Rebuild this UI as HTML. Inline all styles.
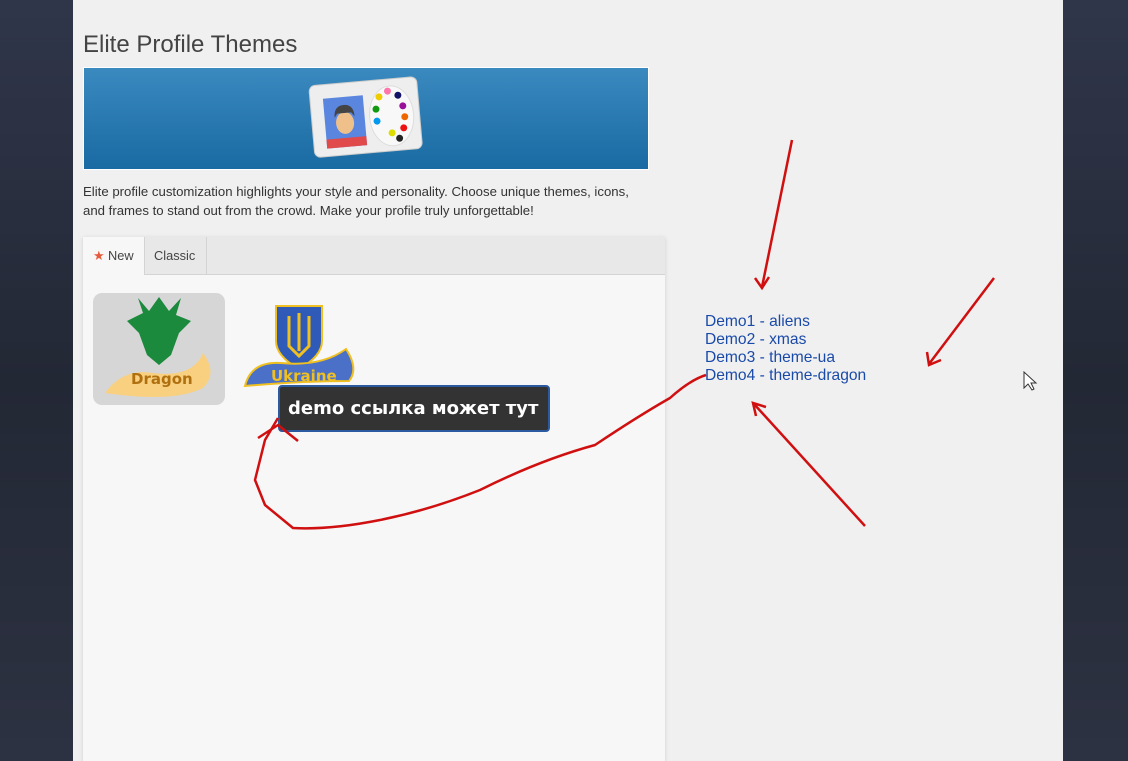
<!DOCTYPE html>
<html><head><meta charset="utf-8"><style>
html,body{margin:0;width:1128px;height:761px;overflow:hidden}
body{background:#2a303e;font-family:"Liberation Sans",sans-serif;position:relative}
.side{position:absolute;top:0;height:761px;background:linear-gradient(180deg,#30364a,#232835 50%,#2d3242)}
.main{position:absolute;left:73px;top:0;width:990px;height:761px;background:#f0f0f0}
h1{position:absolute;left:83px;top:31px;margin:0;font-weight:normal;font-size:24px;color:#444}
.banner{position:absolute;left:83px;top:67px;width:566px;height:103px;box-sizing:border-box;border:1px solid #fff;background:linear-gradient(180deg,#3a8ac0,#1a6aa3)}
.desc{position:absolute;left:83px;top:182px;width:562px;font-size:13.2px;line-height:19px;color:#333}
.panel{position:absolute;left:83px;top:237px;width:582px;height:524px;background:#f7f7f7;box-shadow:0 1px 4px rgba(0,0,0,.15)}
.tabs{height:37px;background:#e8e8e8;border-bottom:1px solid #d4d4d4;position:relative}
.tab{position:absolute;top:0;height:37px;line-height:38px;font-size:12.8px;color:#444;box-sizing:border-box}
.links{position:absolute;left:705px;top:313px;font-size:15.6px;line-height:18px;color:#1a4aa8}
.tip{position:absolute;left:278px;top:385px;width:272px;height:47px;box-sizing:border-box;background:#333;border:2px solid #2c5aa0;border-radius:4px;color:#fff;font-family:"DejaVu Sans",sans-serif;font-weight:bold;font-size:18px;line-height:43px;padding-left:8px}
</style></head><body>
<div class="side" style="left:0;width:73px"></div>
<div class="side" style="left:1063px;width:65px"></div>
<div class="main"></div>
<h1>Elite Profile Themes</h1>
<div class="banner">
<svg width="566" height="103" style="position:absolute;left:0;top:0">
<g transform="translate(228,13) rotate(-5 55 40)">
<rect x="0" y="0" width="108" height="72" rx="6" fill="#eee" stroke="#ccc"/>
<rect x="13" y="14" width="40" height="50" fill="#5a86e0"/>
<rect x="13" y="55" width="40" height="9" fill="#e04a4a"/>
<ellipse cx="33" cy="40" rx="9" ry="11" fill="#f0c08a"/>
<path d="M23 34 Q23 22 33 22 Q43 22 43 34 L40 30 L26 30Z" fill="#444"/>
<ellipse cx="80" cy="37" rx="22" ry="30" fill="#f8f8f8" stroke="#ddd"/>
<circle cx="78" cy="12" r="3.5" fill="#f7a"/><circle cx="88" cy="17" r="3.5" fill="#116"/><circle cx="69" cy="17" r="3.5" fill="#ec0"/>
<circle cx="92" cy="28" r="3.5" fill="#919"/><circle cx="65" cy="29" r="3.5" fill="#191"/><circle cx="93" cy="39" r="3.5" fill="#e60"/>
<circle cx="65" cy="41" r="3.5" fill="#09e"/><circle cx="91" cy="50" r="3.5" fill="#e11"/><circle cx="79" cy="54" r="3.5" fill="#dd0"/><circle cx="86" cy="60" r="3.5" fill="#222"/>
</g></svg></div>
<div class="desc">Elite profile customization highlights your style and personality. Choose unique themes, icons, and frames to stand out from the crowd. Make your profile truly unforgettable!</div>
<div class="panel">
<div class="tabs">
<div class="tab" style="left:0;width:62px;background:#f7f7f7;border-right:1px solid #d4d4d4;padding-left:10px;height:38px"><span style="color:#e55a3a">★</span> New</div>
<div class="tab" style="left:62px;width:62px;border-right:1px solid #d4d4d4;padding-left:9px">Classic</div>
</div>
<div style="position:absolute;left:10px;top:56px;width:132px;height:112px;background:#d6d6d6;border-radius:9px">
<svg width="132" height="112"><path d="M50 20 L45 5 L56 18 L66 4 L76 18 L88 5 L83 22 L98 28 L86 40 L78 62 L66 72 L54 62 L46 40 L34 28Z" fill="#1c8a3c"/>
<path d="M12 100 Q30 75 60 80 Q100 85 110 60 Q125 80 110 95 Q80 110 12 100Z" fill="#f8d080"/>
<text x="38" y="91" font-family="DejaVu Sans" font-size="15" font-weight="bold" fill="#b07010">Dragon</text></svg></div>
<div style="position:absolute;left:158px;top:64px">
<svg width="116" height="90"><path d="M35 5 H81 V40 Q81 55 58 68 Q35 55 35 40Z" fill="#2f5ab8" stroke="#f0c020" stroke-width="2"/>
<path d="M48 15 V45 L58 55 L68 45 V15 M58 12 V50" stroke="#f0c020" stroke-width="3" fill="none"/>
<path d="M4 85 Q10 60 40 62 Q80 66 105 48 Q118 68 108 80 Q60 80 4 85Z" fill="#4a70c8" stroke="#f0c020" stroke-width="2"/>
<text x="30" y="80" font-family="DejaVu Sans" font-size="15" font-weight="bold" fill="#f0c020">Ukraine</text></svg></div>
</div>
<div class="links">Demo1 - aliens<br>Demo2 - xmas<br>Demo3 - theme-ua<br>Demo4 - theme-dragon</div>
<div class="tip">demo ссылка может тут</div>
<svg width="1128" height="761" style="position:absolute;left:0;top:0" fill="none" stroke="#d01010" stroke-width="2.5">
<path d="M792 140 L762 287 M755 278 L762 288 L769 277"/>
<path d="M994 278 L929 364 M927 352 L929 365 L941 360"/>
<path d="M865 526 L754 404 M756 416 L753 403 L766 407"/>
<path d="M706 375 Q690 380 670 398 Q640 415 595 445 Q540 460 480 490 Q430 510 380 520 Q330 530 293 528 L265 505 L255 480 L265 440 L278 418 M258 438 L278 425 L298 441"/>
<path d="M1024 372 L1024 388 L1028 384 L1032 390 L1034 389 L1031 383 L1036 383Z" stroke="#333" stroke-width="1" fill="#fff"/>
</svg>
</body></html>
